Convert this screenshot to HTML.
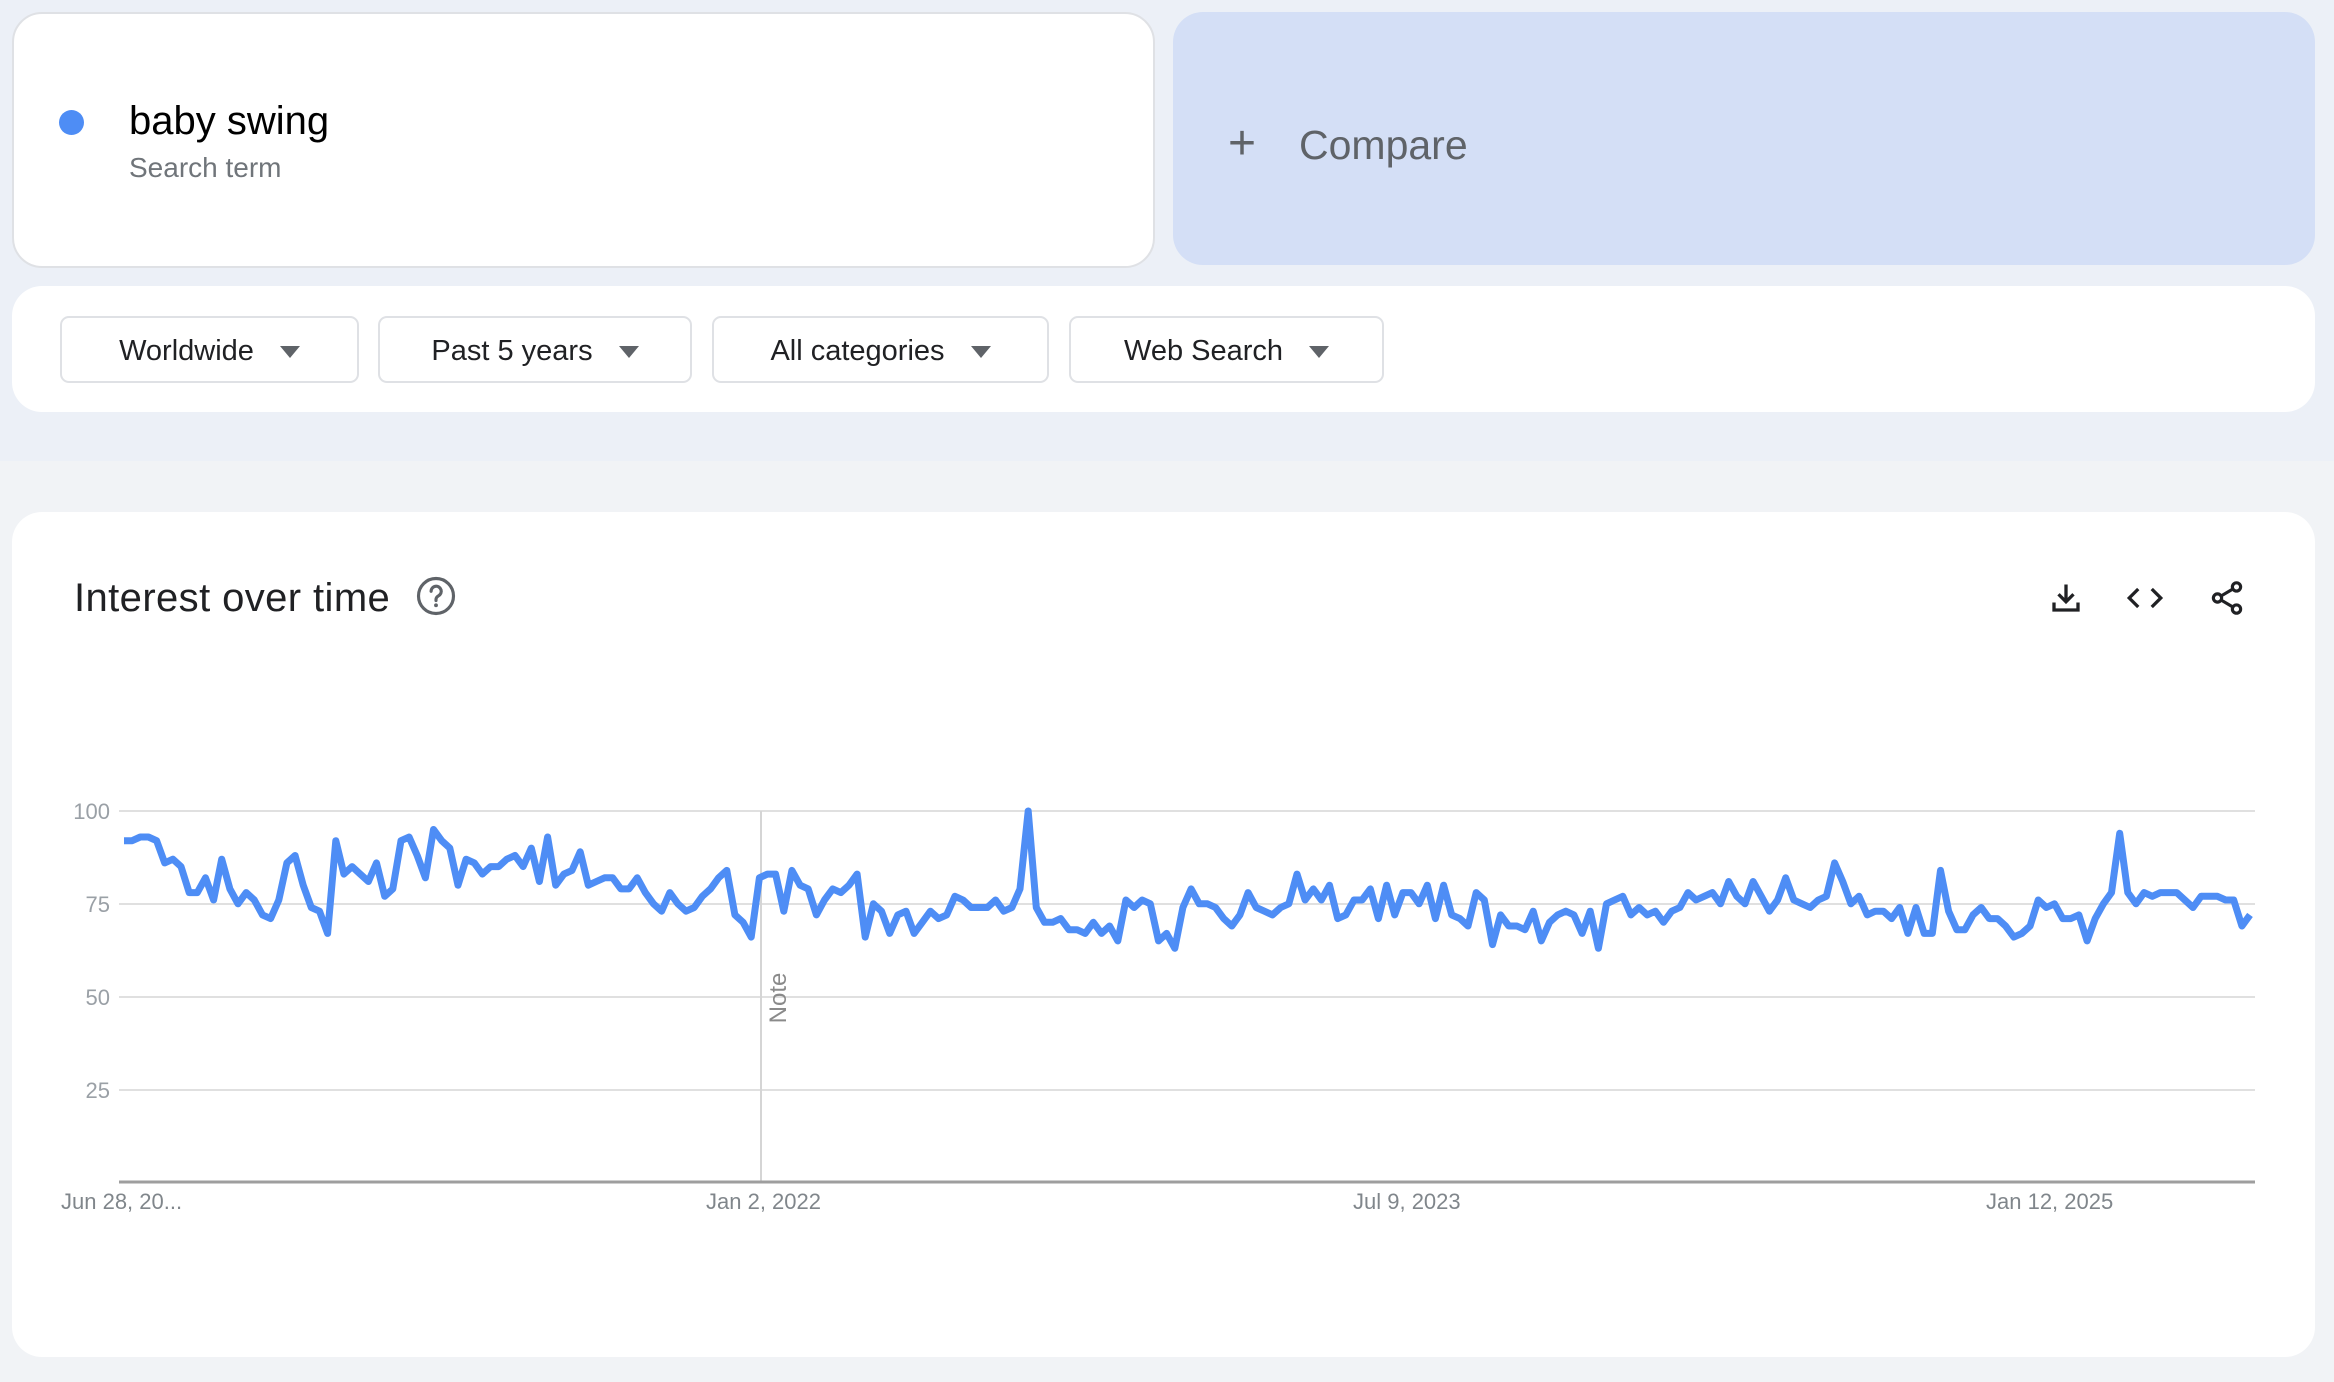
<!DOCTYPE html>
<html><head><meta charset="utf-8">
<style>
*{margin:0;padding:0;box-sizing:border-box}
body{width:2334px;height:1382px;background:#f1f3f6;font-family:"Liberation Sans",sans-serif;position:relative;overflow:hidden}
.top{position:absolute;left:0;top:0;width:2334px;height:461px;background:#ecf0f7}
.card{position:absolute;background:#fff;border-radius:30px}
.btn{position:absolute;top:316px;height:67px;border:2px solid #dfe1e5;border-radius:9px;background:#fff;font-size:29px;color:#202124;display:flex;align-items:center;justify-content:center;padding-top:4px}
.btn .tri{display:inline-block;width:0;height:0;border-left:10px solid transparent;border-right:10px solid transparent;border-top:12px solid #5f6368;margin-left:26px}
.yl{position:absolute;font-size:22px;color:#9aa0a6;text-align:right;width:60px;left:50px}
.xl{position:absolute;top:1189px;font-size:22px;color:#80868b}
</style></head><body>
<div class="top"></div>
<div class="card" style="left:12px;top:12px;width:1143px;height:256px;border:2px solid #dfe1e5"></div>
<div style="position:absolute;left:59px;top:110px;width:25px;height:25px;border-radius:50%;background:#4e8df5"></div>
<div style="position:absolute;left:129px;top:99px;font-size:40px;color:#000">baby swing</div>
<div style="position:absolute;left:129px;top:152px;font-size:28px;color:#70757a">Search term</div>
<div style="position:absolute;left:1173px;top:12px;width:1142px;height:253px;border-radius:30px;background:#d4dff6"></div>
<div style="position:absolute;left:1228px;top:120px;font-size:48px;color:#5f6368;line-height:1">+</div>
<div style="position:absolute;left:1299px;top:122px;font-size:41px;color:#5f6368">Compare</div>
<div class="card" style="left:12px;top:286px;width:2303px;height:126px"></div>
<div class="btn" style="left:60px;width:299px">Worldwide<span class="tri"></span></div>
<div class="btn" style="left:378px;width:314px">Past 5 years<span class="tri"></span></div>
<div class="btn" style="left:712px;width:337px">All categories<span class="tri"></span></div>
<div class="btn" style="left:1069px;width:315px">Web Search<span class="tri"></span></div>
<div class="card" style="left:12px;top:512px;width:2303px;height:845px"></div>
<div style="position:absolute;left:74px;top:576px;font-size:40px;color:#202124;letter-spacing:0.4px">Interest over time</div>
<svg style="position:absolute;left:415px;top:575px" width="42" height="42" viewBox="0 0 24 24"><circle cx="12" cy="12" r="10" fill="none" stroke="#5f6368" stroke-width="1.8"/><path d="M9.2 9.3a2.9 2.9 0 1 1 4.2 2.6c-.9.5-1.4 1-1.4 2.1v.6" fill="none" stroke="#5f6368" stroke-width="1.8" stroke-linecap="round"/><circle cx="12" cy="17.3" r="1.1" fill="#5f6368"/></svg>
<svg style="position:absolute;left:2048px;top:580px" width="36" height="36" viewBox="0 0 24 24"><path d="M12 3v11M7 9.5l5 5 5-5M4 15v5h16v-5" fill="none" stroke="#202124" stroke-width="2.2"/></svg>
<svg style="position:absolute;left:2125px;top:580px" width="40" height="36" viewBox="0 0 26 24"><path d="M8.5 6l-6 6 6 6M17.5 6l6 6-6 6" fill="none" stroke="#202124" stroke-width="2.2"/></svg>
<svg style="position:absolute;left:2208px;top:579px" width="38" height="38" viewBox="0 0 24 24"><circle cx="18" cy="5" r="2.6" fill="none" stroke="#202124" stroke-width="2"/><circle cx="6" cy="12" r="2.6" fill="none" stroke="#202124" stroke-width="2"/><circle cx="18" cy="19" r="2.6" fill="none" stroke="#202124" stroke-width="2"/><path d="M8.3 10.7l7.4-4.4M8.3 13.3l7.4 4.4" stroke="#202124" stroke-width="2"/></svg>
<svg style="position:absolute;left:0;top:0" width="2334" height="1382">
<g stroke="#e0e0e0" stroke-width="2"><line x1="119" y1="811" x2="2255" y2="811"/><line x1="119" y1="904" x2="2255" y2="904"/><line x1="119" y1="997" x2="2255" y2="997"/><line x1="119" y1="1090" x2="2255" y2="1090"/></g>
<line x1="761" y1="811" x2="761" y2="1182" stroke="#d5d5d5" stroke-width="2"/>
<line x1="119" y1="1182" x2="2255" y2="1182" stroke="#9e9e9e" stroke-width="3"/>
<text x="786" y="998" transform="rotate(-90 786 998)" font-family="Liberation Sans" font-size="24" fill="#8a8a8a" text-anchor="middle">Note</text>
<polyline id="ln" fill="none" stroke="#4e8df5" stroke-width="7" stroke-linejoin="round"/>
</svg>
<div class="yl" style="top:799px">100</div>
<div class="yl" style="top:892px">75</div>
<div class="yl" style="top:985px">50</div>
<div class="yl" style="top:1078px">25</div>
<div class="xl" style="left:61px">Jun 28, 20...</div>
<div class="xl" style="left:706px">Jan 2, 2022</div>
<div class="xl" style="left:1353px">Jul 9, 2023</div>
<div class="xl" style="left:1986px">Jan 12, 2025</div>
<script>
var a=[92,92,93,93,92,86,87,85,78,78,82,76,87,79,75,78,76,72,71,76,86,88,80,74,73,67,92,83,85,83,81,86,77,79,92,93,88,82,95,92,90,80,87,86,83,85,85,87,88,85,90,81,93,80,83,84,89,80,81,82,82,79,79,82,78,75,73,78,75,73,74,77,79,82,84,72,70,66,82,83,83,73,84,80,79,72,76,79,78,80,83,66,75,73,67,72,73,67,70,73,71,72,77,76,74,74,74,76,73,74,79,100,74,70,70,71,68,68,67,70,67,69,65,76,74,76,75,65,67,63,74,79,75,75,74,71,69,72,78,74,73,72,74,75,83,76,79,76,80,71,72,76,76,79,71,80,72,78,78,75,80,71,80,72,71,69,78,76,64,72,69,69,68,73,65,70,72,73,72,67,73,63,75,76,77,72,74,72,73,70,73,74,78,76,77,78,75,81,77,75,81,77,73,76,82,76,75,74,76,77,86,81,75,77,72,73,73,71,74,67,74,67,67,84,73,68,68,72,74,71,71,69,66,67,69,76,74,75,71,71,72,65,71,75,78,94,78,75,78,77,78,78,78,76,74,77,77,77,76,76,69,72];
var n=a.length,p=[];for(var i=0;i<n;i++){p.push((124+i*(2250-124)/(n-1)).toFixed(1)+","+(1182-a[i]*3.71).toFixed(1));}
document.getElementById("ln").setAttribute("points",p.join(" "));
</script>
</body></html>
